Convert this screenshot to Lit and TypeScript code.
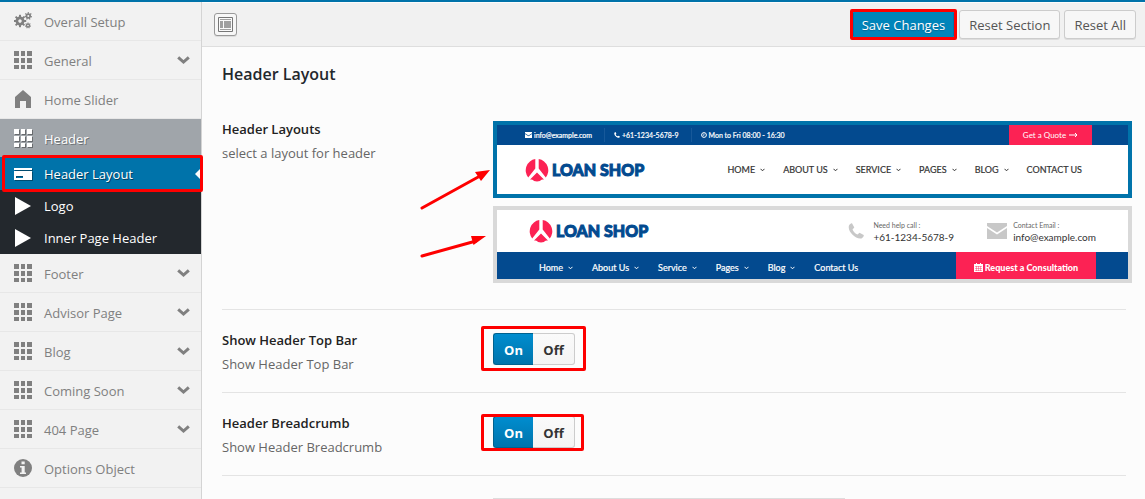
import { LitElement, html, css, svg, nothing } from "lit";
import { customElement, state } from "lit/decorators.js";
import { classMap } from "lit/directives/class-map.js";

const gear = (cx: number, cy: number, r: number, teeth: number, hole: number) => svg`
  <g transform="translate(${cx} ${cy})">
    <circle r=${(r + hole) / 2} fill="none" stroke="currentColor" stroke-width=${r - hole}></circle>
    ${Array.from({ length: teeth }, (_, i) => svg`
      <rect x=${-r * 0.22} y=${-r * 1.38} width=${r * 0.44} height=${r * 0.55}
        fill="currentColor" transform="rotate(${(i * 360) / teeth})"></rect>`)}
  </g>`;

const icons = {
  gears: svg`${gear(6, 9, 4.5, 8, 1.7)}${gear(14.3, 4, 2.8, 7, 1)}${gear(14, 13.5, 2.2, 7, 0.8)}`,
  grid: svg`<path fill="currentColor" d="M0 0h5v5H0zM7 0h4v5H7zM13 0h5v5h-5zM0 7h5v5H0zM7 7h4v5H7zM13 7h5v5h-5zM0 14h5v4H0zM7 14h4v4H7zM13 14h5v4h-5z"></path>`,
  home: svg`<path fill="currentColor" d="M9 0l8 7v11h-5v-7H6v7H1V7z"></path>`,
  card: svg`<path fill="currentColor" fill-rule="evenodd" d="M0 3h18v2H0zM0 6h18v9H0zM2 11v2h7v-2z"></path>`,
  play: svg`<path fill="currentColor" d="M1 0l16 9L1 18z"></path>`,
  info: svg`<circle cx="9" cy="9" r="9" fill="currentColor"></circle><path fill="#f2f2f2" d="M7.5 2.5h3.2v2.8H7.5zM6 7h4.7v6.5H12V15H6v-1.500h1.600V8.500H6z"></path>`,
};

interface Item {
  label: string;
  icon: keyof typeof icons;
  kind?: "open" | "sub" | "current";
  more?: boolean;
}

const menu: Item[] = [
  { label: "Overall Setup", icon: "gears" },
  { label: "General", icon: "grid", more: true },
  { label: "Home Slider", icon: "home" },
  { label: "Header", icon: "grid", kind: "open" },
  { label: "Header Layout", icon: "card", kind: "current" },
  { label: "Logo", icon: "play", kind: "sub" },
  { label: "Inner Page Header", icon: "play", kind: "sub" },
  { label: "Footer", icon: "grid", more: true },
  { label: "Advisor Page", icon: "grid", more: true },
  { label: "Blog", icon: "grid", more: true },
  { label: "Coming Soon", icon: "grid", more: true },
  { label: "404 Page", icon: "grid", more: true },
  { label: "Options Object", icon: "info" },
];

const mail = (w: number, h: number) => html`<svg width=${w} height=${h} viewBox="0 0 20 16" preserveAspectRatio="none">
  <path fill="currentColor" d="M0 0h20v3l-10 6.500L0 3zM0 5l10 6.500L20 5v11H0z"></path></svg>`;
const phone = (s: number) => html`<svg width=${s} height=${s} viewBox="0 0 16 16">
  <path fill="currentColor" d="M1 2.500C2 1 3 0 4 .3L6.300 4.400 4.500 6.500c.8 2.200 2.800 4.200 5 5l2-1.800 4.200 2.200c.4 1.200-.6 2.500-2.200 3.500C8 17-1 8 1 2.500z"></path></svg>`;
const caret = html`<svg width="5" height="4" viewBox="0 0 5 4"><path d="M.5.8l2 2 2-2" fill="none" stroke="currentColor"></path></svg>`;

const brand = html`<span class="brand">
  <svg width="24" height="24" viewBox="0 0 24 24">
    <path fill="#fc2254" d="M10.300 1v9.500L3.200 19.500A11.500 11.500 0 0 1 10.300 1zM13.700 1v9.500l7.100 9A11.500 11.500 0 0 0 13.700 1zM12 14.500l7 7c-1.800 0-3.200.3-4 1.500a12 12 0 0 1-6 0c-.8-1.200-2.200-1.500-4-1.500z"></path>
  </svg><b>LOAN SHOP</b></span>`;

@customElement("layout-preview")
class LayoutPreview extends LitElement {
  static properties = { variant: { type: String } };
  declare variant: string;

  static styles = css`
    :host { display: block; font-family: Lato, "Open Sans", sans-serif; background: #fff; height: 69px; overflow: hidden; }
    * { box-sizing: border-box; }
    svg { display: block; flex: none; }
    span { white-space: nowrap; }
    .top { display: flex; height: 20px; padding: 0 36px 0 28px; background: #034a8f; color: #fff; font-size: 8px; align-items: center; }
    .fact { display: flex; align-items: center; gap: 2px; padding-right: 12px; margin-right: 9px; border-right: 1px solid #17599a; height: 14px; font-size: 7px; -webkit-text-stroke: 0.2px; }
    .fact.last { border: 0; }
    .quote { margin-left: auto; width: 83px; background: #fc2254; height: 100%; display: flex; align-items: center; justify-content: center; gap: 3px; }
    .main { display: flex; align-items: center; justify-content: space-between; height: 49px; padding: 0 46px 0 28px; }
    .brand { display: flex; align-items: center; gap: 3px; color: #034a8f; }
    .brand b { font-weight: 900; font-size: 16px; line-height: 24px; -webkit-text-stroke: 1px #034a8f; }
    .nav { display: flex; gap: 19px; font-size: 9px; color: #333; }
    .main .nav { gap: 18px; -webkit-text-stroke: 0.2px; }
    .nav span { display: flex; align-items: center; gap: 5px; }
    .info { display: flex; align-items: center; height: 42px; padding: 0 32px; color: #333; }
    .contact { display: flex; align-items: center; gap: 9px; margin-left: 33px; color: #c8c8c8; }
    .contact:nth-child(2) { margin-left: auto; }
    .contact.post { gap: 6px; }
    .contact p { margin: 0; color: #333; font-size: 10px; line-height: 12px; }
    .contact small { display: block; font-size: 7px; color: #666; }
    .bar { display: flex; justify-content: space-between; height: 27px; padding: 0 32px 0 42px; background: #034a8f; }
    .bar .nav { color: #fff; align-items: center; padding-top: 4px; -webkit-text-stroke: 0.2px; }
    .ask { display: flex; align-items: center; justify-content: center; gap: 2px; width: 140px; padding-top: 4px; background: #fc2254; color: #fff; font-weight: 900; font-size: 9px; }
  `;

  private links(labels: string[]) {
    return html`<div class="nav">${labels.map((l, i) => html`<span>${l}${i < labels.length - 1 ? caret : nothing}</span>`)}</div>`;
  }

  render() {
    if (this.variant === "top") {
      return html`
        <div class="top">
          <span class="fact">${mail(7, 6)}info@example.com</span>
          <span class="fact">${phone(6)}+61-1234-5678-9</span>
          <span class="fact last"><svg width="6" height="6" viewBox="0 0 6 6"><circle cx="3" cy="3" r="2.400" fill="none" stroke="#fff"></circle><path d="M3 1.500v1.800H1.800" fill="none" stroke="#fff" stroke-width=".7"></path></svg>Mon to Fri 08:00 - 16:30</span>
          <span class="quote">Get a Quote <svg width="9" height="6" viewBox="0 0 9 6"><path d="M0 3h8M6 1l2 2-2 2" fill="none" stroke="#fff"></path></svg></span>
        </div>
        <div class="main">${brand}${this.links(["HOME", "ABOUT US", "SERVICE", "PAGES", "BLOG", "CONTACT US"])}</div>`;
    }
    return html`
      <div class="info">${brand}
        <div class="contact">${phone(16)}<p><small>Need help call :</small>+61-1234-5678-9</p></div>
        <div class="contact post">${mail(20, 16)}<p><small>Contact Email :</small>info@example.com</p></div>
      </div>
      <div class="bar">${this.links(["Home", "About Us", "Service", "Pages", "Blog", "Contact Us"])}
        <span class="ask"><svg width="9" height="9" viewBox="0 0 9 9"><path fill="#fff" d="M0 1h2V0h1v1h3V0h1v1h2v8H0z"></path><path d="M1 3.500h7M1 5.500h7M1 7.500h7M2.500 3v5M4.500 3v5M6.500 3v5" stroke="#fc2254" stroke-width=".4"></path></svg>Request a Consultation</span>
      </div>`;
  }
}

@customElement("app-root")
class AppRoot extends LitElement {
  @state() layout = "top";

  static styles = css`
    :host { display: block; height: 100vh; overflow: hidden; font: 13px/20px "Open Sans", "Noto Sans", sans-serif; color: #666; background: #fcfcfc; }
    * { box-sizing: border-box; }
    svg { display: block; }
    .page { display: grid; grid-template-columns: 202px minmax(0, 1fr); border-top: 2px solid #0073aa; min-height: 100%; }
    .side { background: #f2f2f2; border-right: 1px solid #d4d4d4; }
    .side ul { list-style: none; margin: 0; padding: 0; }
    .side li { position: relative; }
    .side a { display: flex; align-items: center; gap: 12px; height: 39px; padding: 0 11px 0 14px; border-bottom: 1px solid #e7e7e7; color: #808080; text-decoration: none; }
    .side a svg { flex: none; }
    .side a span { flex: 1; padding-top: 2px; }
    .side .open a { height: 38px; border: 0; background: #a0a5aa; color: #fff; text-shadow: 1px 1px #6d7276; }
    .side .open svg, .side .current svg { filter: drop-shadow(1px 1px 0 rgba(0, 0, 0, 0.35)); }
    .side .current a { height: 33px; border: 0; background: #0073aa; color: #fff; text-shadow: 1px 1px #00405f; }
    .side .sub a { height: 32px; border: 0; background: #23282d; color: #fff; }
    .side .sub span, .side .current span { padding-top: 0; }
    .pointer { position: absolute; right: 0; top: 11px; border: 6px solid transparent; border-right-color: #fcfcfc; border-left: 0; }
    .mark { position: absolute; border: 3px solid #fe0000; border-radius: 2px; pointer-events: none; z-index: 2; }
    .around-item { inset: -2px -2px -2px 2px; }
    .around-save { inset: -1px -3px -1px -3px; }
    .around-tall { inset: -7px -11px -6px -12px; }
    .around-short { inset: -2px -9px -3px -12px; }
    .tools { display: flex; align-items: center; gap: 4px; height: 45px; padding: 0 9px 0 12px; background: #f1f1f1; border-bottom: 1px solid #dedede; border-top: 1px solid #fcfcfc; }
    .tools button { display: block; font: inherit; height: 29px; padding: 0 9px; border: 1px solid #ccc; border-radius: 3px; background: #f7f7f7; color: #555; box-shadow: 0 1px #ddd; white-space: nowrap; }
    .tools .expand { margin-right: auto; width: 23px; height: 23px; padding: 2px; border-color: #999; }
    .tools .wrap { position: relative; margin-right: 1px; }
    .tools .save { padding: 0 8px; background: #0085ba; border-color: #0073aa; color: #fff; box-shadow: none; text-shadow: 0 1px 1px #006799; }
    .body { padding: 0 19px 0 20px; }
    h2 { margin: 0; padding: 15px 0 13px; font-size: 16px; line-height: 24px; font-weight: 600; color: #23282d; }
    .field { position: relative; display: grid; grid-template-columns: 271px minmax(0, 1fr); min-height: 83px; border-bottom: 1px solid #e4e4e4; }
    .text { padding-top: 20px; }
    .text h3 { margin: 0 0 4px; font-size: 13px; line-height: 20px; font-weight: 600; color: #222; }
    .text p { margin: 0; }
    .control { padding-top: 23px; }
    .control.layouts { display: grid; gap: 8px; padding: 22px 0 26px; margin-right: -6px; }
    .choice { display: block; border: 4px solid #d9d9d9; cursor: pointer; }
    .choice.picked { border-color: #0073aa; }
    .hidden { position: absolute; opacity: 0; width: 1px; height: 1px; margin: 0; }
    .arrows { position: absolute; left: 198px; top: 66px; }
    .toggle { position: relative; display: inline-grid; grid-template-columns: 40px 42px; height: 32px; vertical-align: top; font-weight: 700; color: #333; }
    .toggle label { display: grid; place-items: center; padding-top: 2px; background: linear-gradient(#fafafa, #f4f4f4); border: 1px solid #ccc; border-left: 0; border-radius: 0 3px 3px 0; }
    .toggle .on { color: #fff; background: linear-gradient(#008dcf, #0074ac); border-color: #00628f; border-left: 1px solid #00628f; border-right: 0; border-radius: 3px 0 0 3px; }
    .next { display: block; width: 352px; max-width: 100%; height: 28px; margin: 22px 0 0 271px; border: 1px solid #ddd; background: #fff; }
  `;

  private icon(i: Item) {
    return html`<svg width="18" height="18" viewBox="0 0 18 18">${icons[i.icon]}</svg>`;
  }

  private toggle(name: string, mark: string) {
    return html`<div class="control"><div class="toggle" role="radiogroup" aria-label=${name}>
      <label class="on"><input class="hidden" type="radio" name=${name} checked>On</label>
      <label><input class="hidden" type="radio" name=${name}>Off</label>
      <span class="mark ${mark}"></span></div></div>`;
  }

  private choice(v: string, name: string) {
    return html`<label class=${classMap({ choice: true, picked: this.layout === v })} aria-label=${name}>
      <input class="hidden" type="radio" name="layout" .checked=${this.layout === v} @change=${() => (this.layout = v)}>
      <layout-preview variant=${v}></layout-preview></label>`;
  }

  render() {
    return html`<div class="page">
      <nav class="side"><ul>${menu.map((i) => html`
        <li class=${i.kind ?? ""}><a href="#">${this.icon(i)}<span>${i.label}</span>
          ${i.more ? html`<svg width="13" height="9" viewBox="0 0 13 9"><path d="M1.200 1.300l5.300 4.700 5.300-4.700" fill="none" stroke="currentColor" stroke-width="3"></path></svg>` : nothing}</a>
          ${i.kind === "current" ? html`<i class="pointer"></i><i class="mark around-item"></i>` : nothing}
        </li>`)}</ul></nav>
      <main>
        <div class="tools">
          <button class="expand" aria-label="Expand options"><svg width="17" height="17" viewBox="0 0 17 17">
            <path d="M1.500 1.500h14v14h-14z" fill="#fafafa" stroke="#777"></path><path fill="#a0a0a0" d="M3 3h11v1H3zM3 5h3v7H3zM7 5h7v7H7zM3 13h11v1H3z"></path></svg></button>
          <span class="wrap"><button class="save">Save Changes</button><i class="mark around-save"></i></span>
          <button>Reset Section</button>
          <button>Reset All</button>
        </div>
        <div class="body">
          <h2>Header Layout</h2>
          <section class="field">
            <div class="text"><h3>Header Layouts</h3><p>select a layout for header</p></div>
            <div class="control layouts">${this.choice("top", "Header with top bar")}${this.choice("bar", "Header with navigation bar")}</div>
            <svg class="arrows" width="72" height="94" viewBox="0 0 72 94">
              <path d="M2 43L60 11M2 91L56 76" stroke="#fe0000" stroke-width="3" stroke-linecap="round"></path>
              <path fill="#fe0000" d="M70 5L55 7l6 9zM66 71L51 71l2.500 9z"></path></svg>
          </section>
          <section class="field">
            <div class="text"><h3>Show Header Top Bar</h3><p>Show Header Top Bar</p></div>
            ${this.toggle("Show Header Top Bar", "around-tall")}
          </section>
          <section class="field">
            <div class="text"><h3>Header Breadcrumb</h3><p>Show Header Breadcrumb</p></div>
            ${this.toggle("Header Breadcrumb", "around-short")}
          </section>
          <input class="next" aria-label="Breadcrumb background">
        </div>
      </main>
    </div>`;
  }
}
